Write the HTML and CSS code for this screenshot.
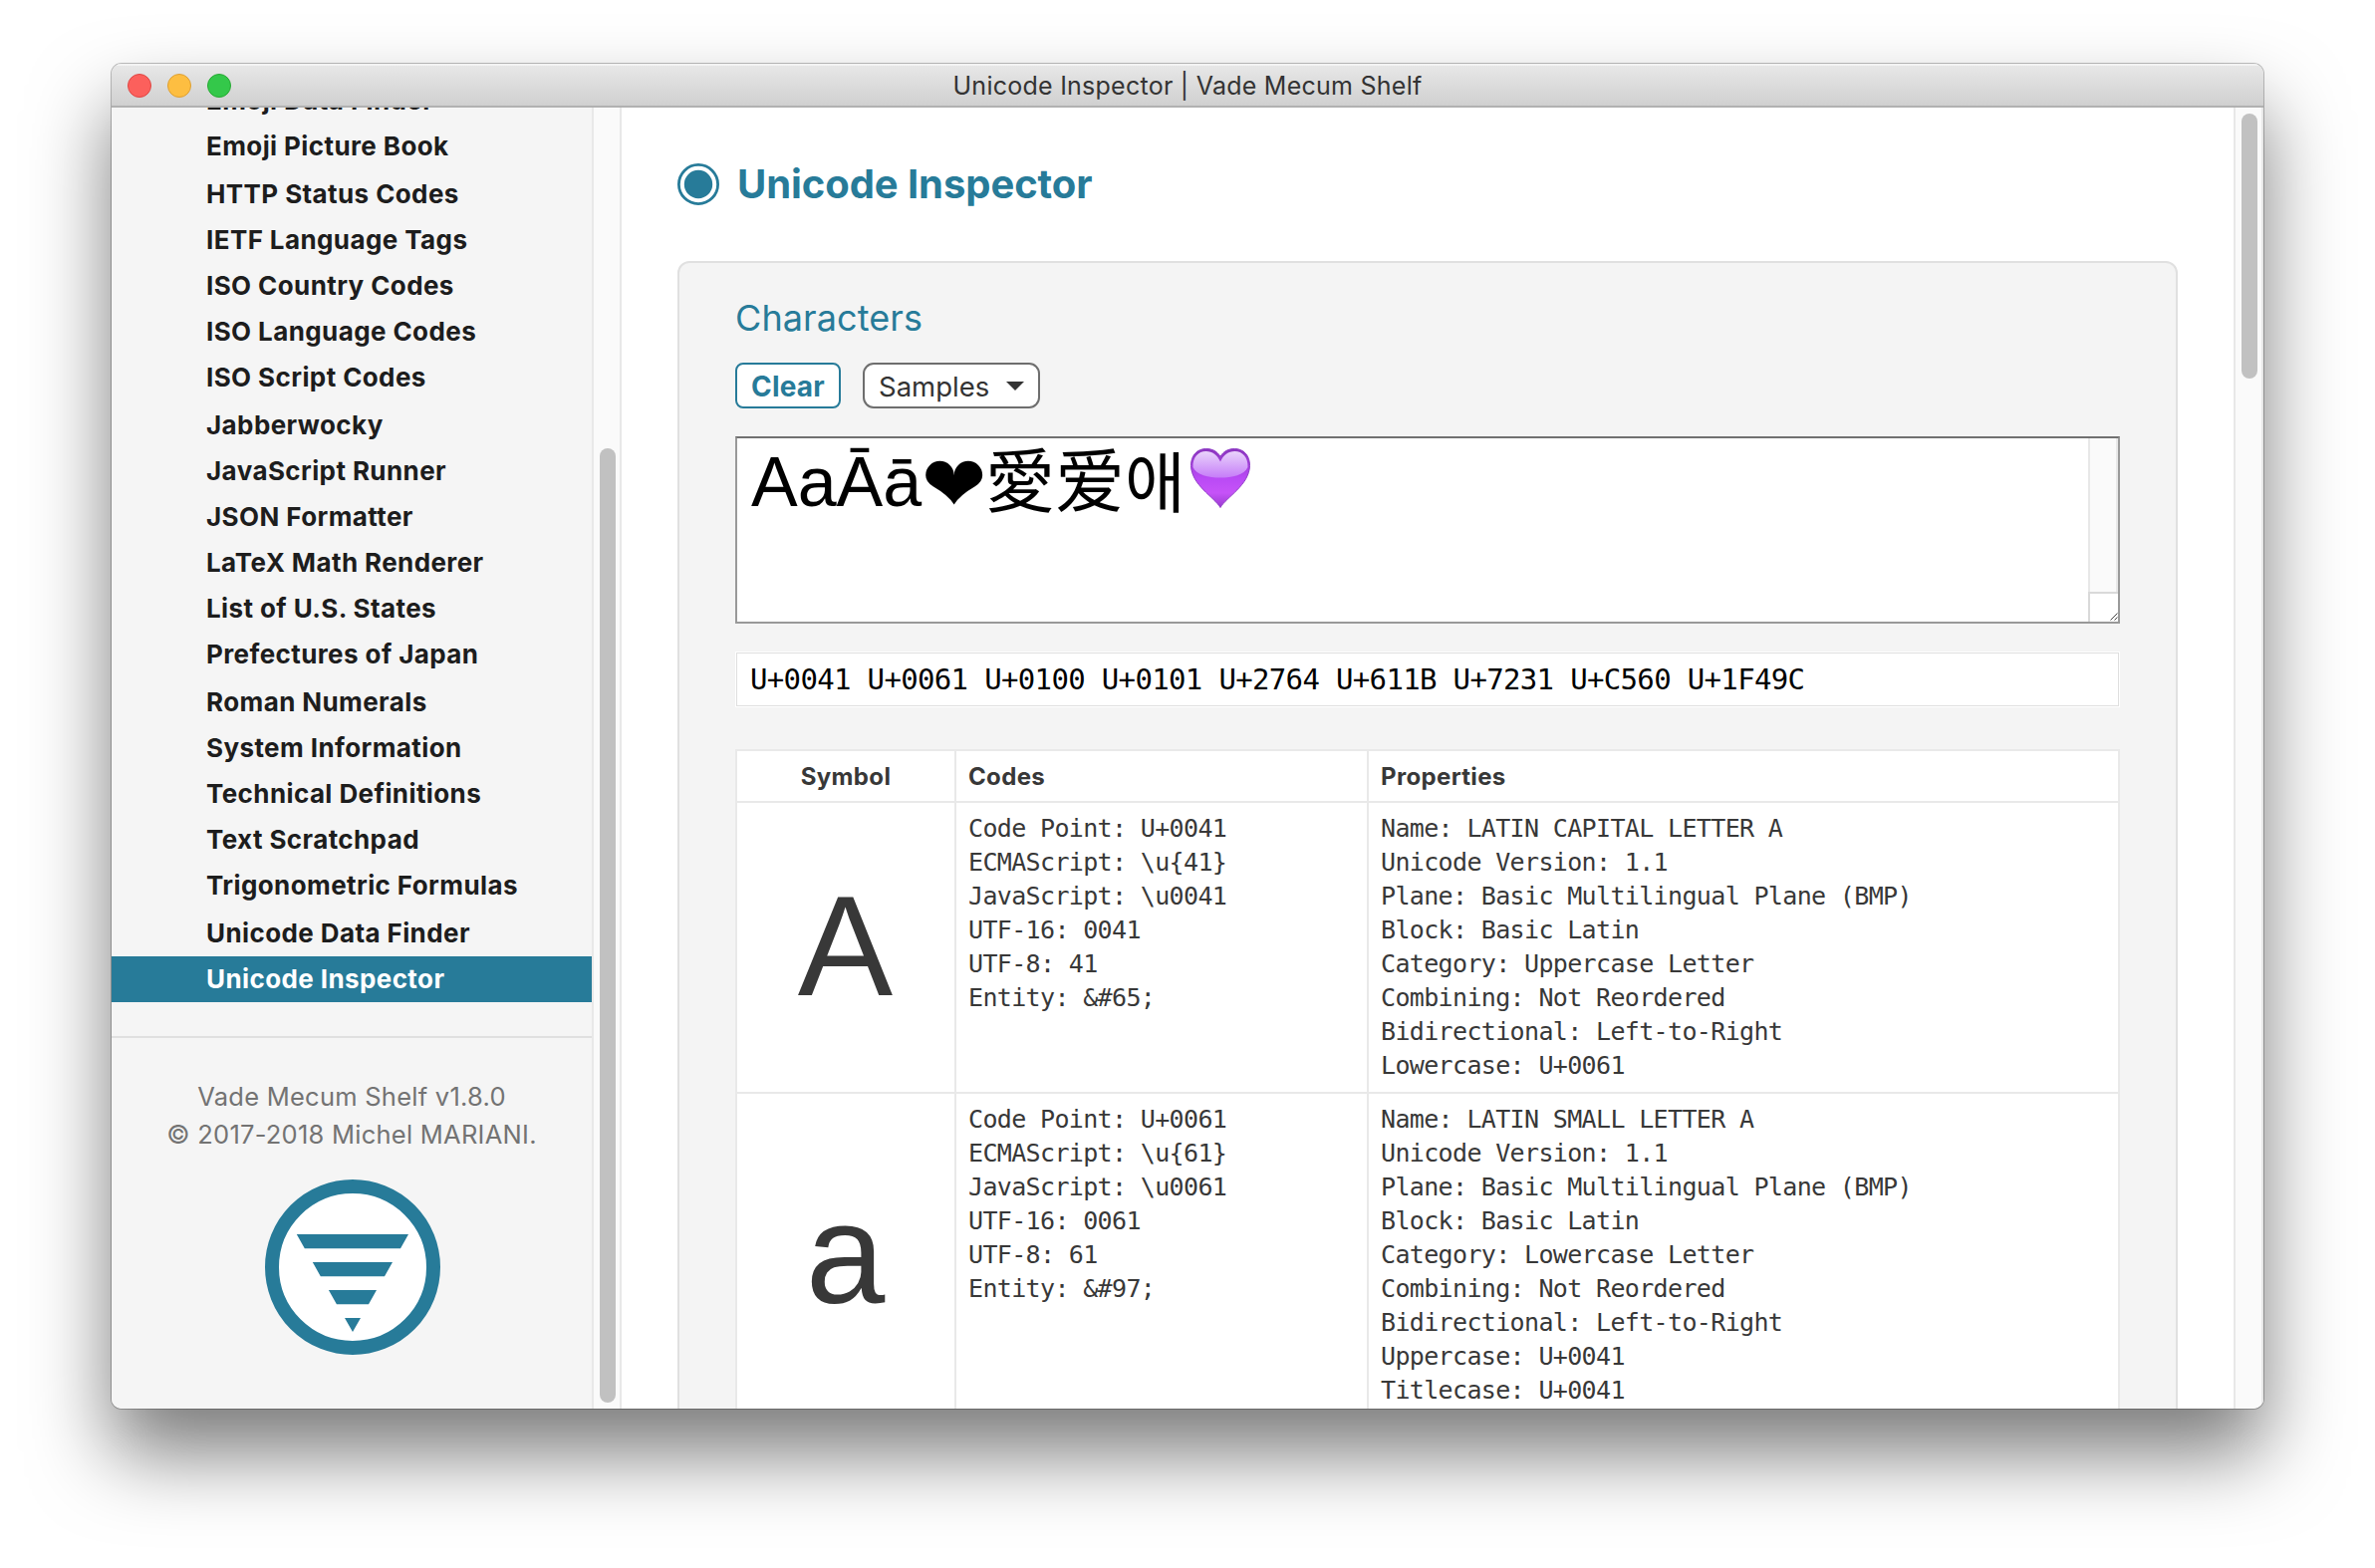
FILE: index.html
```html
<!DOCTYPE html>
<html lang="en">
<head>
<meta charset="utf-8">
<title>Unicode Inspector | Vade Mecum Shelf</title>
<link rel="stylesheet" href="styles.css">
</head>
<body>
<div class="window">
  <header class="titlebar">
    <div class="lights"><span class="light red"></span><span class="light yellow"></span><span class="light green"></span></div>
    <div class="title">Unicode Inspector | Vade Mecum Shelf</div>
  </header>
  <div class="content">
    <aside class="sidebar">
      <ul class="menu">
        <li>Emoji Data Finder</li>
        <li>Emoji Picture Book</li>
        <li class="step">HTTP Status Codes</li>
        <li>IETF Language Tags</li>
        <li>ISO Country Codes</li>
        <li>ISO Language Codes</li>
        <li>ISO Script Codes</li>
        <li class="step">Jabberwocky</li>
        <li>JavaScript Runner</li>
        <li>JSON Formatter</li>
        <li>LaTeX Math Renderer</li>
        <li>List of U.S. States</li>
        <li>Prefectures of Japan</li>
        <li class="step">Roman Numerals</li>
        <li>System Information</li>
        <li>Technical Definitions</li>
        <li>Text Scratchpad</li>
        <li>Trigonometric Formulas</li>
        <li class="step">Unicode Data Finder</li>
        <li class="active">Unicode Inspector</li>
      </ul>
      <footer class="about">
        <p>Vade Mecum Shelf v1.8.0</p>
        <p>© 2017-2018 Michel MARIANI.</p>
        <svg class="logo" viewBox="0 0 176 176" width="176" height="176">
          <circle cx="88" cy="88" r="81" fill="#fff" stroke="#277b99" stroke-width="14"/>
          <path fill="#277b99" d="M31.800 55H144l-8 14.300H39.800zM47.800 83H128l-8 14.300H55.800zM63.900 111H112l-8 14.200H71.900zM80 139h16l-8 14z"/>
        </svg>
      </footer>
    </aside>
    <div class="track side-track"><div class="thumb"></div></div>
    <main class="main">
      <h1>
        <svg class="radio" viewBox="0 0 42 42" width="42" height="42"><circle cx="21" cy="21" r="19.600" fill="none" stroke="#277b99" stroke-width="2.800"/><circle cx="21" cy="21" r="14.200" fill="#277b99"/></svg>
        <span>Unicode Inspector</span>
      </h1>
      <section class="panel">
        <h2>Characters</h2>
        <div class="controls">
          <button class="clear">Clear</button>
          <button class="samples">Samples<svg viewBox="0 0 18 9" width="18" height="9"><path d="M0 0h18l-9 9z" fill="#333"/></svg></button>
        </div>
        <div class="input">
          <div class="chars"><span class="latin">AaĀā</span><span class="heart">❤</span><span class="han">愛</span><span class="han sc">爱</span><span class="ko">애</span><svg class="emoji" viewBox="0 0 60 60" width="60" height="60">
            <defs>
              <linearGradient id="body" x1="0" y1="0" x2="0" y2="1"><stop offset="0" stop-color="#8a35bd"/><stop offset=".5" stop-color="#b94af5"/><stop offset=".75" stop-color="#c653f8"/><stop offset="1" stop-color="#9a3bd0"/></linearGradient>
              <linearGradient id="gloss" x1="0" y1="0" x2="0" y2="1"><stop offset="0" stop-color="#e9d3fb"/><stop offset="1" stop-color="#c67df8"/></linearGradient>
            </defs>
            <path d="M30 59.500C24 49 1 37 .5 17.500C.3 7 7 .5 15.500.5C22 .5 27 3 30 8.500C33 3 38 .5 44.500.5C53 .5 59.700 7 59.500 17.500C59 37 36 49 30 59.500z" fill="url(#body)" stroke="#8f3cc6" stroke-width="1"/>
            <path d="M2.500 19C2 9 8 3 15.500 3C22 3 27 7 30 13.500C33 7 38 3 44.500 3C52 3 58 9 57.500 19C54 27 42 29.500 30 29.500S6 27 2.500 19z" fill="url(#gloss)"/>
          </svg></div>
          <div class="input-side">
            <div class="input-track"></div>
            <div class="grip"><svg viewBox="0 0 8 8" width="8" height="8"><path d="M.5 7.500l7-7M4.500 7.500l3-3" stroke="#444" stroke-width="1" fill="none"/></svg></div>
          </div>
        </div>
        <div class="output">U+0041 U+0061 U+0100 U+0101 U+2764 U+611B U+7231 U+C560 U+1F49C</div>
        <div class="table">
          <div class="row head">
            <div class="cell center">Symbol</div>
            <div class="cell">Codes</div>
            <div class="cell">Properties</div>
          </div>
          <div class="row">
            <div class="cell symbol">A</div>
            <div class="cell mono">Code Point: U+0041
ECMAScript: \u{41}
JavaScript: \u0041
UTF-16: 0041
UTF-8: 41
Entity: &amp;#65;</div>
            <div class="cell mono">Name: LATIN CAPITAL LETTER A
Unicode Version: 1.1
Plane: Basic Multilingual Plane (BMP)
Block: Basic Latin
Category: Uppercase Letter
Combining: Not Reordered
Bidirectional: Left-to-Right
Lowercase: U+0061</div>
          </div>
          <div class="row">
            <div class="cell symbol">a</div>
            <div class="cell mono">Code Point: U+0061
ECMAScript: \u{61}
JavaScript: \u0061
UTF-16: 0061
UTF-8: 61
Entity: &amp;#97;</div>
            <div class="cell mono">Name: LATIN SMALL LETTER A
Unicode Version: 1.1
Plane: Basic Multilingual Plane (BMP)
Block: Basic Latin
Category: Lowercase Letter
Combining: Not Reordered
Bidirectional: Left-to-Right
Uppercase: U+0041
Titlecase: U+0041</div>
          </div>
        </div>
      </section>
    </main>
    <div class="track main-track"><div class="thumb"></div></div>
  </div>
</div>
</body>
</html>
```
FILE: styles.css
```css
* { box-sizing: border-box; }

body {
  margin: 0;
  padding: 64px 112px 160px;
  height: 1574px;
  overflow: hidden;
  background: #fff;
  font-family: Inter, "Liberation Sans", sans-serif;
  color: #383838;
}

h1, h2, p, ul { margin: 0; padding: 0; }

.window {
  display: flex;
  flex-direction: column;
  width: 2160px;
  height: 1350px;
  overflow: hidden;
  border-radius: 10px;
  background: #fff;
  box-shadow: 0 0 0 1px rgba(0, 0, 0, .25), 0 45px 80px rgba(0, 0, 0, .52);
}

.titlebar {
  display: grid;
  grid-template-columns: 240px 1fr 240px;
  align-items: center;
  flex: none;
  height: 44px;
  padding: 0 16px;
  background: linear-gradient(#e8e8e8, #d0d0d0);
  border-bottom: 2px solid #b1b1b1;
  box-shadow: inset 0 2px 0 #f3f3f3;
}

.lights { display: flex; gap: 16px; padding-top: 1px; }
.light { width: 24px; height: 24px; border-radius: 50%; border: 1px solid; }
.red { background: #fc605c; border-color: #de4643; }
.yellow { background: #fdbe41; border-color: #dd9f33; }
.green { background: #34c84a; border-color: #27a933; }

.title {
  padding-top: 3px;
  text-align: center;
  font-size: 25px;
  line-height: 39px;
  letter-spacing: .25px;
  color: #333;
}

.content { display: flex; flex: 1; min-height: 0; }

.sidebar {
  display: flex;
  flex-direction: column;
  width: 482px;
  overflow: hidden;
  background: #f5f5f5;
}

.menu {
  flex: none;
  list-style: none;
  margin-top: -30px;
  font-size: 26px;
  font-weight: 700;
  letter-spacing: .4px;
  color: #1d1d1d;
}
.menu li { height: 46px; line-height: 46px; padding-left: 95px; }
.menu .step { margin-top: 2px; }
.menu .active { background: #277b99; color: #fff; }

.about {
  flex: 1;
  margin-top: 34px;
  padding-top: 40px;
  border-top: 2px solid #e0e0e0;
  text-align: center;
  font-size: 25.5px;
  line-height: 38px;
  letter-spacing: .25px;
  color: #737373;
}
.logo { display: block; margin: 26px 0 0 154px; }

.track {
  flex: none;
  background: #fafafa;
  border: solid #e8e8e8;
  border-width: 0 2px;
}
.thumb { width: 16px; margin-left: 6px; border-radius: 8px; background: #c1c1c1; }
.side-track { width: 30px; padding-top: 342px; }
.side-track .thumb { height: 958px; }
.main-track { width: 30px; padding-top: 6px; }
.main-track .thumb { height: 266px; }

.main { flex: 1; padding: 54px 56px 0; overflow: hidden; }

h1 {
  display: flex;
  align-items: center;
  gap: 18px;
  height: 46px;
  font-size: 40px;
  line-height: 44px;
  font-weight: 700;
  letter-spacing: -.08px;
  color: #277b99;
}

.panel {
  height: 1250px;
  margin-top: 54px;
  padding: 30px 56px 0;
  background: #f4f4f4;
  border: 2px solid #e0e0e0;
  border-radius: 12px;
}

h2 { font-size: 36px; font-weight: 400; line-height: 50px; letter-spacing: .1px; color: #277b99; }

.controls { display: flex; gap: 22px; margin-top: 20px; }
button {
  display: flex;
  align-items: center;
  height: 46px;
  padding: 1px 14px 0;
  background: #fff;
  font: 400 27.5px Inter, sans-serif;
}
.clear {
  width: 106px;
  border: 2px solid #277b99;
  border-radius: 8px;
  color: #277b99;
  font-size: 28px;
  font-weight: 700;
  letter-spacing: .2px;
}
.samples { width: 178px; justify-content: space-between; border: 2px solid #6e6e6e; border-radius: 11px; color: #333; }

.input {
  display: flex;
  height: 188px;
  margin-top: 28px;
  background: #fff;
  border: 2px solid #999;
  border-top-color: #707070;
}
.chars {
  flex: 1;
  display: flex;
  align-items: flex-start;
  padding-left: 14px;
  font: 70px/84px "Liberation Sans", Arial, sans-serif;
  color: #000;
}
.latin { width: 171px; padding-top: 2px; }
.heart { width: 64px; padding-top: 4px; font: 78px/84px "DejaVu Sans", sans-serif; }
.han { width: 70px; line-height: 78px; font-family: "Noto Sans CJK JP", sans-serif; }
.sc { font-family: "Noto Sans CJK SC", sans-serif; }
.ko { width: 66px; font: 66px/80px "Noto Sans CJK KR", sans-serif; }
.emoji { display: block; margin-top: 10px; }
.input-side { display: flex; flex-direction: column; width: 30px; }
.input-track { flex: 1; background: #fafafa; border: solid #e8e8e8; border-width: 0 2px; }
.grip {
  display: flex;
  justify-content: flex-end;
  align-items: flex-end;
  height: 30px;
  padding-bottom: 1px;
  border: solid #d9d9d9;
  border-width: 2px 0 0 2px;
}

.output {
  height: 56px;
  margin-top: 28px;
  padding-left: 14px;
  background: #fff;
  border: 1px solid #fff;
  box-shadow: inset 0 0 0 1px #dfdfdf;
  font: 29px/54px "DejaVu Sans Mono", monospace;
  letter-spacing: -.66px;
  color: #000;
  white-space: pre;
}

.table {
  display: grid;
  margin-top: 42px;
  background: #fff;
  border: solid #e9e9e9;
  border-width: 2px 2px 0;
}
.row { display: grid; grid-template-columns: 218px 412px 1fr; column-gap: 2px; border-bottom: 2px solid #e9e9e9; }
.cell { padding: 9px 12px; }
.cell + .cell { box-shadow: -2px 0 0 #e9e9e9; }
.head { height: 52px; font-size: 24px; font-weight: 700; letter-spacing: .35px; }
.head .cell { padding: 0 12px; line-height: 51px; }
.center { text-align: center; }
.row .symbol {
  display: flex;
  align-items: center;
  justify-content: center;
  padding: 0 1px 2px 0;
  font: 143px/160px "Liberation Sans", Arial, sans-serif;
  color: #383838;
}
.mono {
  font: 25px/34px "DejaVu Sans Mono", monospace;
  letter-spacing: -.65px;
  white-space: pre;
  color: #383838;
}
```
